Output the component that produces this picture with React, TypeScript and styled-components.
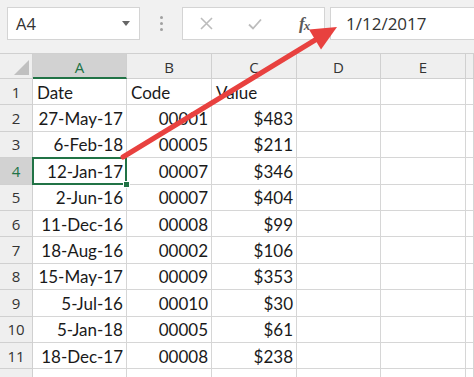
import React from "react";
import styled, { createGlobalStyle, css } from "styled-components";

const Global = createGlobalStyle`
  html, body { margin: 0; padding: 0; background: #ffffff; }
  body { width: 474px; height: 377px; overflow: hidden; }
  * { box-sizing: border-box; }
`;

const GREEN = "#217346";
const GRID = "#d6d6d6";

const Page = styled.div`
  position: relative;
  width: 474px;
  height: 377px;
  overflow: hidden;
  background: #ffffff;
`;

const TopBar = styled.div`
  height: 53px;
  background: #f1f1f1;
  display: flex;
  align-items: flex-start;
  padding: 7px 0 0 7px;
`;

const NameBox = styled.div`
  width: 133px;
  height: 33px;
  background: #fff;
  border: 1px solid #d4d4d4;
  display: flex;
  align-items: center;
  justify-content: space-between;
  padding: 0 9px 0 8px;
  font-family: "Open Sans", "Noto Sans", sans-serif;
  font-size: 16.5px;
  color: #333;
`;

const Caret = styled.span`
  width: 0;
  height: 0;
  border-left: 4.5px solid transparent;
  border-right: 4.5px solid transparent;
  border-top: 5px solid #666;
`;

const Dots = styled.div`
  width: 42px;
  height: 33px;
  display: flex;
  flex-direction: column;
  align-items: center;
  justify-content: center;
  gap: 3px;
  & > span {
    width: 3px;
    height: 3px;
    border-radius: 50%;
    background: #a0a0a0;
  }
`;

const FormulaButtons = styled.div`
  width: 143px;
  height: 33px;
  background: #fff;
  border: 1px solid #d4d4d4;
  display: flex;
  align-items: center;
  padding: 0 0 0 17px;
`;

const IconSlot = styled.div<{ $w: number }>`
  width: ${(p) => p.$w}px;
  display: flex;
  align-items: center;
  justify-content: flex-start;
`;

const Fx = styled.span`
  font-family: "Liberation Serif", "DejaVu Serif", serif;
  font-style: italic;
  font-weight: bold;
  font-size: 17px;
  color: #5a5a5a;
  letter-spacing: -1px;
  margin-left: -2px;
  & sub {
    font-size: 13px;
    vertical-align: -1px;
  }
`;

const FormulaInput = styled.div`
  flex: 1;
  height: 33px;
  margin-left: 5px;
  background: #fff;
  border: 1px solid #d4d4d4;
  border-right: none;
  display: flex;
  align-items: center;
  padding-left: 15px;
  font-family: "Open Sans", "Noto Sans", sans-serif;
  font-size: 17px;
  color: #333;
`;

const Sheet = styled.div`
  display: grid;
  grid-template-columns: 33px 94px 85px 85px 84px 85px 1fr;
  grid-template-rows: 26px repeat(11, 26.4px) 20px;
`;

const headerBase = css`
  background: #efefef;
  border-right: 1px solid #d0d0d0;
  border-bottom: 1px solid #d0d0d0;
  display: flex;
  align-items: center;
  justify-content: center;
  font-family: "Open Sans", "Noto Sans", sans-serif;
  font-size: 15px;
  color: #333;
`;

const Corner = styled.div`
  ${headerBase};
  position: relative;
  border-top: 1px solid #d0d0d0;
  &::after {
    content: "";
    position: absolute;
    right: 3px;
    bottom: 3px;
    width: 0;
    height: 0;
    border-left: 15px solid transparent;
    border-bottom: 15px solid #c0c0c0;
  }
`;

const ColHeader = styled.div<{ $sel?: boolean }>`
  ${headerBase};
  border-top: 1px solid #d0d0d0;
  padding-top: 1px;
  ${(p) =>
    p.$sel &&
    css`
      background: #d2d2d2;
      color: ${GREEN};
      border-bottom: 2px solid ${GREEN};
      padding-top: 2px;
    `}
`;

const RowHeader = styled.div<{ $sel?: boolean }>`
  ${headerBase};
  ${(p) =>
    p.$sel &&
    css`
      background: #d2d2d2;
      color: ${GREEN};
    `}
`;

const Cell = styled.div<{ $align?: "left" | "right" }>`
  position: relative;
  border-right: 1px solid ${GRID};
  border-bottom: 1px solid ${GRID};
  display: flex;
  align-items: center;
  justify-content: ${(p) => (p.$align === "right" ? "flex-end" : "flex-start")};
  padding: 1px 3px 0 4px;
  font-family: "Lato", "Open Sans", sans-serif;
  font-size: 17px;
  color: #1a1a1a;
  white-space: nowrap;
`;

const SelectedCell = styled(Cell)`
  &::after {
    content: "";
    position: absolute;
    left: -1px;
    top: -1px;
    right: -1px;
    bottom: -1px;
    border: 2px solid ${GREEN};
    pointer-events: none;
  }
`;

const FillHandle = styled.span`
  position: absolute;
  right: -4px;
  bottom: -4px;
  width: 7px;
  height: 7px;
  background: ${GREEN};
  border: 1px solid #fff;
  z-index: 2;
`;

const ArrowOverlay = styled.svg`
  position: absolute;
  left: 0;
  top: 0;
  pointer-events: none;
`;

const rows: [string, string, string][] = [
  ["27-May-17", "00001", "$483"],
  ["6-Feb-18", "00005", "$211"],
  ["12-Jan-17", "00007", "$346"],
  ["2-Jun-16", "00007", "$404"],
  ["11-Dec-16", "00008", "$99"],
  ["18-Aug-16", "00002", "$106"],
  ["15-May-17", "00009", "$353"],
  ["5-Jul-16", "00010", "$30"],
  ["5-Jan-18", "00005", "$61"],
  ["18-Dec-17", "00008", "$238"],
];

const cols = ["A", "B", "C", "D", "E"];

export default function App() {
  return (
    <>
      <Global />
      <Page>
        <TopBar>
          <NameBox>
            <span>A4</span>
            <Caret />
          </NameBox>
          <Dots>
            <span />
            <span />
            <span />
          </Dots>
          <FormulaButtons>
            <IconSlot $w={48}>
              <svg width="13" height="13" viewBox="0 0 13 13">
                <path d="M1 1 L12 12 M12 1 L1 12" stroke="#bcbcbc" strokeWidth="1.6" fill="none" />
              </svg>
            </IconSlot>
            <IconSlot $w={53}>
              <svg width="14" height="12" viewBox="0 0 14 12">
                <path d="M1 6.5 L5 10.5 L13 1.5" stroke="#bcbcbc" strokeWidth="1.8" fill="none" />
              </svg>
            </IconSlot>
            <Fx>
              f<sub>x</sub>
            </Fx>
          </FormulaButtons>
          <FormulaInput>1/12/2017</FormulaInput>
        </TopBar>
        <Sheet>
          <Corner />
          {cols.map((c) => (
            <ColHeader key={c} $sel={c === "A"}>
              {c}
            </ColHeader>
          ))}
          <ColHeader />

          <RowHeader>1</RowHeader>
          <Cell>Date</Cell>
          <Cell>Code</Cell>
          <Cell>Value</Cell>
          <Cell />
          <Cell />
          <Cell />

          {rows.map((r, i) => {
            const n = i + 2;
            const sel = n === 4;
            return (
              <React.Fragment key={n}>
                <RowHeader $sel={sel}>{n}</RowHeader>
                {sel ? (
                  <SelectedCell $align="right">
                    {r[0]}
                    <FillHandle />
                  </SelectedCell>
                ) : (
                  <Cell $align="right">{r[0]}</Cell>
                )}
                <Cell $align="right">{r[1]}</Cell>
                <Cell $align="right">{r[2]}</Cell>
                <Cell />
                <Cell />
                <Cell />
              </React.Fragment>
            );
          })}

          <RowHeader />
          <Cell />
          <Cell />
          <Cell />
          <Cell />
          <Cell />
          <Cell />
        </Sheet>
        <ArrowOverlay width="474" height="377" viewBox="0 0 474 377">
          <line x1="123" y1="157" x2="316" y2="39.5" stroke="#e8413f" strokeWidth="5" strokeLinecap="round" />
          <polygon points="337,27 321,49.5 309,29.5" fill="#e8413f" />
        </ArrowOverlay>
      </Page>
    </>
  );
}
